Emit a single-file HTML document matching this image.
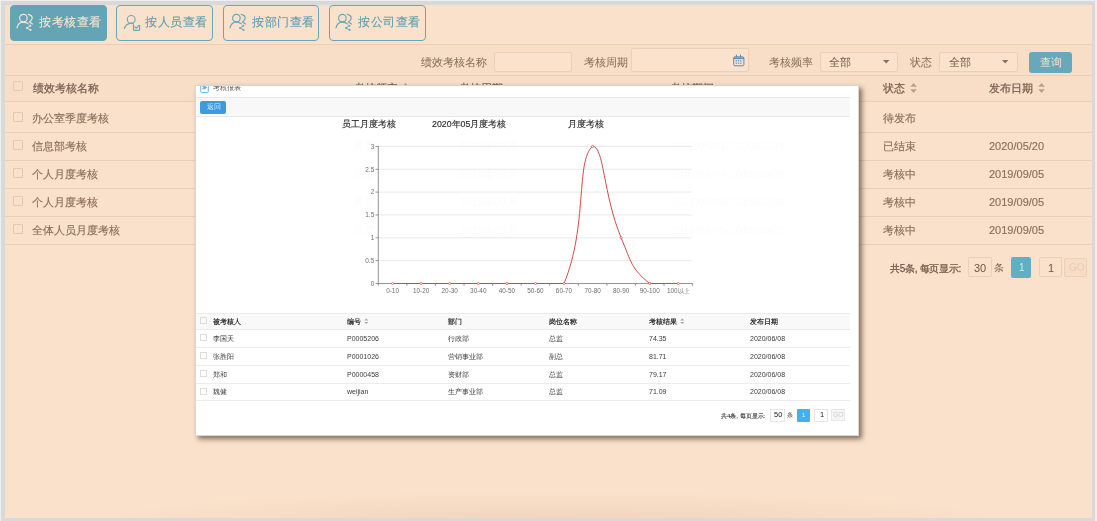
<!DOCTYPE html>
<html><head><meta charset="utf-8">
<style>
*{margin:0;padding:0;box-sizing:border-box}
html,body{width:1097px;height:521px;overflow:hidden;background:#efefef;font-family:"Liberation Sans",sans-serif}
.abs{position:absolute}
#frame{position:absolute;left:1px;top:1px;width:1094px;height:520px;background:#d9d9d9}
#page{position:absolute;left:5px;top:5px;width:1087px;height:513px;background:#fae1cb;overflow:hidden}
.t{position:absolute;white-space:nowrap;line-height:1;will-change:transform}
.hl{position:absolute;left:0;width:1087px;height:1px;background:#e9cfb8}
.btn{position:absolute;top:0;height:35.6px;border:1px solid #6aa6b7;border-radius:4px;color:#5c9db0;font-size:12.4px;letter-spacing:0.6px}
.btn.on{background:#63a4b5;border-color:#63a4b5;color:#fbe3cd}
.btn svg{position:absolute;left:5.2px;top:6.2px}
.btn span{position:absolute;left:27.5px;top:9.6px;line-height:1;will-change:transform;-webkit-text-stroke:0.12px currentColor}
.lbl{color:#8a6f5d;font-size:11px;-webkit-text-stroke:0.05px #8a6f5d}
.inp{position:absolute;border:1px solid #ead0ba;border-radius:2px;background:#fbe2cc}
.cb{position:absolute;width:10px;height:10px;border:1px solid #e4c8b1;border-radius:1px}
.td{color:#8a6f5d;font-size:11px;-webkit-text-stroke:0.15px #8a6f5d}
.th{color:#7a6150;font-size:11px;-webkit-text-stroke:0.25px #7a6150}

#modal{position:absolute;left:190px;top:80px;width:664px;height:351px;background:#fff;border:1px solid #d6d6d6;box-shadow:3px 3px 5px rgba(40,20,0,.55);overflow:hidden}
.mt{font-size:8.8px;color:#2a2a2a;-webkit-text-stroke:0.15px #2a2a2a}
.ax{font-size:6.5px;color:#666}
.mth{font-size:7px;font-weight:bold;color:#333}
.mtd{font-size:7px;color:#3a3a3a}
.mcb{position:absolute;width:7px;height:7px;border:1px solid #ddd}
.ml{position:absolute;left:0;width:654px;height:1px;background:#ececec}
</style></head><body>
<div id="frame"></div>
<div id="page">
  <!-- top buttons -->
  <div class="btn on" style="left:5px;width:97px">
    <svg width="22" height="22" viewBox="0 0 22 22" fill="none" stroke="#fbe3cd" stroke-width="1.2" stroke-linecap="round">
      <circle cx="7.4" cy="6.1" r="3.8"/>
      <path d="M1 15.9 C1.8 12.4 4.6 10.2 7.4 10.2 C9.4 10.2 11.2 10.9 12.4 11.9"/>
      <path d="M12.3 2.3 C14.6 2.8 16.2 4.3 16.2 6 C16.2 7.6 14.9 9 13.6 10 L16.4 12"/>
      <path d="M14.3 13.8 L11.1 16 L14.6 18.1" stroke-width="1"/>
      <circle cx="14.3" cy="13.8" r="1" fill="#fbe3cd" stroke="none"/><circle cx="11.1" cy="16" r="1.1" fill="#fbe3cd" stroke="none"/><circle cx="14.6" cy="18.1" r="1" fill="#fbe3cd" stroke="none"/>
    </svg>
    <span>按考核查看</span>
  </div>
  <div class="btn" style="left:111px;width:97px">
    <svg width="22" height="22" viewBox="0 0 22 22" fill="none" stroke="#6aa6b7" stroke-width="1.15" stroke-linecap="round">
      <circle cx="9.2" cy="7.4" r="3.9"/>
      <path d="M2.3 16.5 C3.4 13.6 5.6 11.6 8.6 11.4 L11.2 11.4"/>
      <path d="M11.5 12.6 V17.4 Q11.5 18.4 12.5 18.4 H16.6 Q17.6 18.4 17.6 17.4 V13.6"/>
      <path d="M12.8 14.9 L14.2 16.2 L17 13.4"/>
    </svg>
    <span>按人员查看</span>
  </div>
  <div class="btn" style="left:218px;width:96px">
    <svg width="22" height="22" viewBox="0 0 22 22" fill="none" stroke="#6aa6b7" stroke-width="1.2" stroke-linecap="round">
      <circle cx="7.4" cy="6.1" r="3.8"/>
      <path d="M1 15.9 C1.8 12.4 4.6 10.2 7.4 10.2 C9.4 10.2 11.2 10.9 12.4 11.9"/>
      <path d="M12.3 2.3 C14.6 2.8 16.2 4.3 16.2 6 C16.2 7.6 14.9 9 13.6 10 L16.4 12"/>
      <path d="M14.3 13.8 L11.1 16 L14.6 18.1" stroke-width="1"/>
      <circle cx="14.3" cy="13.8" r="1" fill="#6aa6b7" stroke="none"/><circle cx="11.1" cy="16" r="1.1" fill="#6aa6b7" stroke="none"/><circle cx="14.6" cy="18.1" r="1" fill="#6aa6b7" stroke="none"/>
    </svg>
    <span>按部门查看</span>
  </div>
  <div class="btn" style="left:324px;width:97px">
    <svg width="22" height="22" viewBox="0 0 22 22" fill="none" stroke="#6aa6b7" stroke-width="1.2" stroke-linecap="round">
      <circle cx="7.4" cy="6.1" r="3.8"/>
      <path d="M1 15.9 C1.8 12.4 4.6 10.2 7.4 10.2 C9.4 10.2 11.2 10.9 12.4 11.9"/>
      <path d="M12.3 2.3 C14.6 2.8 16.2 4.3 16.2 6 C16.2 7.6 14.9 9 13.6 10 L16.4 12"/>
      <path d="M14.3 13.8 L11.1 16 L14.6 18.1" stroke-width="1"/>
      <circle cx="14.3" cy="13.8" r="1" fill="#6aa6b7" stroke="none"/><circle cx="11.1" cy="16" r="1.1" fill="#6aa6b7" stroke="none"/><circle cx="14.6" cy="18.1" r="1" fill="#6aa6b7" stroke="none"/>
    </svg>
    <span>按公司查看</span>
  </div>
  <div class="abs" style="left:0;top:39px;width:1087px;height:57px;background:#f8dec7"></div>
  <div class="hl" style="top:39px"></div>

  <!-- filter row -->
  <div class="t lbl" style="left:416px;top:52px">绩效考核名称</div>
  <div class="inp" style="left:489px;top:47px;width:78px;height:20px"></div>
  <div class="t lbl" style="left:579px;top:52px">考核周期</div>
  <div class="inp" style="left:626px;top:43px;width:118px;height:24px"></div>
  <div class="t lbl" style="left:764px;top:52px">考核频率</div>
  <div class="inp" style="left:815px;top:47px;width:78px;height:20px"></div>
  <div class="t lbl" style="left:824px;top:52px;color:#7b6252">全部</div>
  <div class="t lbl" style="left:905px;top:52px">状态</div>
  <div class="inp" style="left:934px;top:47px;width:79px;height:20px"></div>
  <div class="t lbl" style="left:944px;top:52px;color:#7b6252">全部</div>
  <div class="abs" style="left:1024px;top:46.8px;width:43px;height:20.8px;background:#66a9ba;border-radius:3px"></div>
  <div class="t" style="left:1035px;top:52px;font-size:11px;color:#fbe3cd">查询</div>
  <div class="hl" style="top:70px"></div>
  <svg class="abs" style="left:905.3px;top:77.6px" width="8" height="11" viewBox="0 0 8 11"><path d="M0.3 3.7 L3.6 0 L6.9 3.7Z M0.3 6.3 L3.6 10 L6.9 6.3Z" fill="#b9a18c"/></svg>
  <svg class="abs" style="left:1033.2px;top:77.6px" width="8" height="11" viewBox="0 0 8 11"><path d="M0.3 3.7 L3.6 0 L6.9 3.7Z M0.3 6.3 L3.6 10 L6.9 6.3Z" fill="#b9a18c"/></svg>
  <svg class="abs" style="left:397.0px;top:77.6px" width="8" height="11" viewBox="0 0 8 11"><path d="M0.3 3.7 L3.6 0 L6.9 3.7Z M0.3 6.3 L3.6 10 L6.9 6.3Z" fill="#b9a18c"/></svg>
  <svg class="abs" style="left:727.8px;top:48.6px" width="12" height="13" viewBox="0 0 12 13" fill="none" stroke="#5b8db5" stroke-width="1"><rect x="0.7" y="2.8" width="10.2" height="9" rx="1.3"/><path d="M0.7 4.3 H10.9" stroke-width="1.6"/><path d="M3.4 0.6 V3.5 M7.5 0.6 V3.5"/><path d="M2.6 6.9 H9 M2.6 9.3 H9" stroke-dasharray="1.4 0.8" stroke-width="1.1"/></svg>
  <svg class="abs" style="left:877.5px;top:55.4px" width="7" height="4" viewBox="0 0 7 4"><path d="M0 0 H6.4 L3.2 3.6Z" fill="#8a7060"/></svg>
  <svg class="abs" style="left:997.0px;top:55.4px" width="7" height="4" viewBox="0 0 7 4"><path d="M0 0 H6.4 L3.2 3.6Z" fill="#8a7060"/></svg>

  <!-- main table -->
  <div class="cb" style="left:8px;top:76px"></div>
  <div class="t th" style="left:28px;top:78px">绩效考核名称</div>
  <div class="t th" style="left:348.5px;top:78px">考核频率</div>
  <div class="t th" style="left:453.5px;top:78px">考核周期</div>
  <div class="t th" style="left:665px;top:78px">考核期间</div>
  <div class="t th" style="left:878px;top:78px">状态</div>
  <div class="t th" style="left:984px;top:78px">发布日期</div>
  <div class="cb" style="left:8px;top:107px"></div><div class="t td" style="left:27px;top:108px">办公室季度考核</div>
  <div class="t td" style="left:878px;top:108px">待发布</div>
  <div class="cb" style="left:8px;top:135px"></div><div class="t td" style="left:27px;top:136px">信息部考核</div>
  <div class="t td" style="left:878px;top:136px">已结束</div><div class="t td" style="left:984px;top:136px">2020/05/20</div>
  <div class="cb" style="left:8px;top:163px"></div><div class="t td" style="left:27px;top:164px">个人月度考核</div>
  <div class="t td" style="left:878px;top:164px">考核中</div><div class="t td" style="left:984px;top:164px">2019/09/05</div>
  <div class="cb" style="left:8px;top:191px"></div><div class="t td" style="left:27px;top:192px">个人月度考核</div>
  <div class="t td" style="left:878px;top:192px">考核中</div><div class="t td" style="left:984px;top:192px">2019/09/05</div>
  <div class="cb" style="left:8px;top:219px"></div><div class="t td" style="left:27px;top:220px">全体人员月度考核</div>
  <div class="t td" style="left:878px;top:220px">考核中</div><div class="t td" style="left:984px;top:220px">2019/09/05</div>
  <div class="hl" style="top:96px"></div>
  <div class="hl" style="top:127px"></div>
  <div class="hl" style="top:155px"></div>
  <div class="hl" style="top:183px"></div>
  <div class="hl" style="top:211px"></div>
  <div class="hl" style="top:239px"></div>

  <div class="abs" style="left:100px;top:470px;width:900px;height:43px;background:radial-gradient(ellipse 50% 60% at 50% 100%, rgba(160,100,50,0.09), rgba(160,100,50,0) 100%)"></div>
  <!-- pagination -->
  <div class="t" style="left:885px;top:259px;font-size:10px;color:#6f5646;-webkit-text-stroke:0.25px #6f5646;letter-spacing:-0.3px">共5条, 每页显示:</div>
  <div class="inp" style="left:963px;top:252px;width:24px;height:20px;background:#fae1cb"></div>
  <div class="t" style="left:969px;top:258px;font-size:11px;color:#6f5646">30</div>
  <div class="t" style="left:989px;top:258px;font-size:10px;color:#6f5646">条</div>
  <div class="abs" style="left:1006px;top:252px;width:20px;height:21px;background:#5fb0c2;border-radius:2px"></div>
  <div class="t" style="left:1014px;top:258px;font-size:10px;color:#cfe6ec">1</div>
  <div class="inp" style="left:1034px;top:252px;width:23px;height:20px;background:#fae1cb"></div>
  <div class="t" style="left:1043px;top:258px;font-size:11px;color:#6f5646">1</div>
  <div class="inp" style="left:1059px;top:253px;width:23px;height:19px;background:#f8dcc6"></div>
  <div class="t" style="left:1064px;top:258px;font-size:10px;color:#e6cdb8">GO</div>

  <!-- modal -->
  <div id="modal">
    <div class="t" style="left:157px;top:55px;font-size:11px;color:#fcfcfc;-webkit-text-stroke:0.2px #fcfcfc">月度</div>
    <div class="t" style="left:263px;top:55px;font-size:11px;color:#fcfcfc;-webkit-text-stroke:0.2px #fcfcfc">2020年05月</div>
    <div class="t" style="left:475px;top:55px;font-size:11px;color:#fcfcfc;-webkit-text-stroke:0.2px #fcfcfc">2020/05/01-2020/05/31</div>
    <div class="t" style="left:157px;top:83px;font-size:11px;color:#fcfcfc;-webkit-text-stroke:0.2px #fcfcfc">月度</div>
    <div class="t" style="left:263px;top:83px;font-size:11px;color:#fcfcfc;-webkit-text-stroke:0.2px #fcfcfc">2019年09月</div>
    <div class="t" style="left:475px;top:83px;font-size:11px;color:#fcfcfc;-webkit-text-stroke:0.2px #fcfcfc">2019/09/04-2019/09/20</div>
    <div class="t" style="left:157px;top:111px;font-size:11px;color:#fcfcfc;-webkit-text-stroke:0.2px #fcfcfc">月度</div>
    <div class="t" style="left:263px;top:111px;font-size:11px;color:#fcfcfc;-webkit-text-stroke:0.2px #fcfcfc">2019年09月</div>
    <div class="t" style="left:475px;top:111px;font-size:11px;color:#fcfcfc;-webkit-text-stroke:0.2px #fcfcfc">2019/09/05-2019/09/30</div>
    <div class="t" style="left:157px;top:139px;font-size:11px;color:#fcfcfc;-webkit-text-stroke:0.2px #fcfcfc">月度</div>
    <div class="t" style="left:263px;top:139px;font-size:11px;color:#fcfcfc;-webkit-text-stroke:0.2px #fcfcfc">2019年09月</div>
    <div class="t" style="left:475px;top:139px;font-size:11px;color:#fcfcfc;-webkit-text-stroke:0.2px #fcfcfc">2019/09/05-2019/09/29</div>
    <svg class="abs" style="left:3.6px;top:-1.2px" width="10" height="9" viewBox="0 0 10 9"><path d="M0.7 0 V6.6 Q0.7 7.6 1.7 7.6 H7.3 Q8.3 7.6 8.3 6.6 V0" fill="none" stroke="#6ab6ee" stroke-width="1"/><path d="M2.2 1.4 H3.2 M2.2 3.6 H3.2 M3.8 0.8 L6.6 2.5 L3.8 4.2Z" stroke="#5aaee9" stroke-width="0.9" fill="#5aaee9"/></svg>
    <div class="t" style="left:17px;top:-2px;font-size:7px;color:#555">考核报表</div>
    <div class="abs" style="left:0;top:11px;width:654px;height:20px;background:#f8f8f8;border-top:1px solid #e8e8e8;border-bottom:1px solid #e8e8e8"></div>
    <div class="abs" style="left:4px;top:15px;width:26px;height:13px;background:#3c9be0;border-radius:2px"></div>
    <div class="t" style="left:10.5px;top:18px;font-size:6.5px;color:#d0e8fa">返回</div>
    <div class="t mt" style="left:146px;top:34px">员工月度考核</div>
    <div class="t mt" style="left:236px;top:34px">2020年05月度考核</div>
    <div class="t mt" style="left:372px;top:34px">月度考核</div>
    <svg class="abs" style="left:-196px;top:-86px" width="1097" height="521" viewBox="0 0 1097 521">
<line x1="378.3" y1="260.65" x2="691.6" y2="260.65" stroke="#e3e3e3" stroke-width="0.8"/>
<line x1="378.3" y1="237.80" x2="691.6" y2="237.80" stroke="#e3e3e3" stroke-width="0.8"/>
<line x1="378.3" y1="214.95" x2="691.6" y2="214.95" stroke="#e3e3e3" stroke-width="0.8"/>
<line x1="378.3" y1="192.10" x2="691.6" y2="192.10" stroke="#e3e3e3" stroke-width="0.8"/>
<line x1="378.3" y1="169.25" x2="691.6" y2="169.25" stroke="#e3e3e3" stroke-width="0.8"/>
<line x1="378.3" y1="146.40" x2="691.6" y2="146.40" stroke="#e3e3e3" stroke-width="0.8"/>
<line x1="378.30" y1="146" x2="378.30" y2="283.90" stroke="#7a7a7a" stroke-width="0.8"/>
<line x1="378.3" y1="283.50" x2="692.6" y2="283.50" stroke="#7a7a7a" stroke-width="0.8"/>
<line x1="375.5" y1="283.50" x2="378.3" y2="283.50" stroke="#7a7a7a" stroke-width="0.8"/>
<text x="374.2" y="285.80" text-anchor="end" font-size="6.4" fill="#6e6e6e" font-family="Liberation Sans">0</text>
<line x1="375.5" y1="260.65" x2="378.3" y2="260.65" stroke="#7a7a7a" stroke-width="0.8"/>
<text x="374.2" y="262.95" text-anchor="end" font-size="6.4" fill="#6e6e6e" font-family="Liberation Sans">0.5</text>
<line x1="375.5" y1="237.80" x2="378.3" y2="237.80" stroke="#7a7a7a" stroke-width="0.8"/>
<text x="374.2" y="240.10" text-anchor="end" font-size="6.4" fill="#6e6e6e" font-family="Liberation Sans">1</text>
<line x1="375.5" y1="214.95" x2="378.3" y2="214.95" stroke="#7a7a7a" stroke-width="0.8"/>
<text x="374.2" y="217.25" text-anchor="end" font-size="6.4" fill="#6e6e6e" font-family="Liberation Sans">1.5</text>
<line x1="375.5" y1="192.10" x2="378.3" y2="192.10" stroke="#7a7a7a" stroke-width="0.8"/>
<text x="374.2" y="194.40" text-anchor="end" font-size="6.4" fill="#6e6e6e" font-family="Liberation Sans">2</text>
<line x1="375.5" y1="169.25" x2="378.3" y2="169.25" stroke="#7a7a7a" stroke-width="0.8"/>
<text x="374.2" y="171.55" text-anchor="end" font-size="6.4" fill="#6e6e6e" font-family="Liberation Sans">2.5</text>
<line x1="375.5" y1="146.40" x2="378.3" y2="146.40" stroke="#7a7a7a" stroke-width="0.8"/>
<text x="374.2" y="148.70" text-anchor="end" font-size="6.4" fill="#6e6e6e" font-family="Liberation Sans">3</text>
<line x1="378.30" y1="283.50" x2="378.30" y2="285.70" stroke="#7a7a7a" stroke-width="0.8"/>
<line x1="406.87" y1="283.50" x2="406.87" y2="285.70" stroke="#7a7a7a" stroke-width="0.8"/>
<line x1="435.45" y1="283.50" x2="435.45" y2="285.70" stroke="#7a7a7a" stroke-width="0.8"/>
<line x1="464.02" y1="283.50" x2="464.02" y2="285.70" stroke="#7a7a7a" stroke-width="0.8"/>
<line x1="492.59" y1="283.50" x2="492.59" y2="285.70" stroke="#7a7a7a" stroke-width="0.8"/>
<line x1="521.16" y1="283.50" x2="521.16" y2="285.70" stroke="#7a7a7a" stroke-width="0.8"/>
<line x1="549.74" y1="283.50" x2="549.74" y2="285.70" stroke="#7a7a7a" stroke-width="0.8"/>
<line x1="578.31" y1="283.50" x2="578.31" y2="285.70" stroke="#7a7a7a" stroke-width="0.8"/>
<line x1="606.88" y1="283.50" x2="606.88" y2="285.70" stroke="#7a7a7a" stroke-width="0.8"/>
<line x1="635.45" y1="283.50" x2="635.45" y2="285.70" stroke="#7a7a7a" stroke-width="0.8"/>
<line x1="664.03" y1="283.50" x2="664.03" y2="285.70" stroke="#7a7a7a" stroke-width="0.8"/>
<line x1="692.60" y1="283.50" x2="692.60" y2="285.70" stroke="#7a7a7a" stroke-width="0.8"/>
<text x="392.59" y="293.2" text-anchor="middle" font-size="6.4" fill="#6e6e6e" font-family="Liberation Sans">0-10</text>
<text x="421.16" y="293.2" text-anchor="middle" font-size="6.4" fill="#6e6e6e" font-family="Liberation Sans">10-20</text>
<text x="449.73" y="293.2" text-anchor="middle" font-size="6.4" fill="#6e6e6e" font-family="Liberation Sans">20-30</text>
<text x="478.30" y="293.2" text-anchor="middle" font-size="6.4" fill="#6e6e6e" font-family="Liberation Sans">30-40</text>
<text x="506.88" y="293.2" text-anchor="middle" font-size="6.4" fill="#6e6e6e" font-family="Liberation Sans">40-50</text>
<text x="535.45" y="293.2" text-anchor="middle" font-size="6.4" fill="#6e6e6e" font-family="Liberation Sans">50-60</text>
<text x="564.02" y="293.2" text-anchor="middle" font-size="6.4" fill="#6e6e6e" font-family="Liberation Sans">60-70</text>
<text x="592.60" y="293.2" text-anchor="middle" font-size="6.4" fill="#6e6e6e" font-family="Liberation Sans">70-80</text>
<text x="621.17" y="293.2" text-anchor="middle" font-size="6.4" fill="#6e6e6e" font-family="Liberation Sans">80-90</text>
<text x="649.74" y="293.2" text-anchor="middle" font-size="6.4" fill="#6e6e6e" font-family="Liberation Sans">90-100</text>
<text x="678.31" y="293.2" text-anchor="middle" font-size="6.4" fill="#6e6e6e" font-family="Liberation Sans">100以上</text>
<path d="M392.59 283.50 C392.59 283.50 406.87 283.50 421.16 283.50 C435.45 283.50 435.45 283.50 449.73 283.50 C464.02 283.50 464.02 283.50 478.30 283.50 C492.59 283.50 492.59 283.50 506.88 283.50 C521.16 283.50 521.16 283.50 535.45 283.50 C549.74 283.50 559.18 283.50 564.02 283.50 C587.75 226.57 575.63 159.97 592.60 146.40 C604.20 146.40 602.89 193.94 621.17 237.80 C631.46 262.49 631.07 268.57 649.74 283.50 C659.64 283.50 678.31 283.50 678.31 283.50" fill="none" stroke="#cc4240" stroke-width="0.95"/>
<circle cx="392.59" cy="283.50" r="1.1" fill="#fff" stroke="#cc4240" stroke-width="0.6"/>
<circle cx="421.16" cy="283.50" r="1.1" fill="#fff" stroke="#cc4240" stroke-width="0.6"/>
<circle cx="449.73" cy="283.50" r="1.1" fill="#fff" stroke="#cc4240" stroke-width="0.6"/>
<circle cx="478.30" cy="283.50" r="1.1" fill="#fff" stroke="#cc4240" stroke-width="0.6"/>
<circle cx="506.88" cy="283.50" r="1.1" fill="#fff" stroke="#cc4240" stroke-width="0.6"/>
<circle cx="535.45" cy="283.50" r="1.1" fill="#fff" stroke="#cc4240" stroke-width="0.6"/>
<circle cx="564.02" cy="283.50" r="1.1" fill="#fff" stroke="#cc4240" stroke-width="0.6"/>
<circle cx="592.60" cy="146.40" r="1.1" fill="#fff" stroke="#cc4240" stroke-width="0.6"/>
<circle cx="621.17" cy="237.80" r="1.1" fill="#fff" stroke="#cc4240" stroke-width="0.6"/>
<circle cx="649.74" cy="283.50" r="1.1" fill="#fff" stroke="#cc4240" stroke-width="0.6"/>
<circle cx="678.31" cy="283.50" r="1.1" fill="#fff" stroke="#cc4240" stroke-width="0.6"/>
</svg>
    <div class="abs" style="left:0.0px;top:226.5px;width:654px;height:17px;background:#f9f9f9;border-top:1px solid #ececec"></div>
    <div class="ml" style="top:243.2px"></div>
    <div class="ml" style="top:261.0px"></div>
    <div class="ml" style="top:278.8px"></div>
    <div class="ml" style="top:296.8px"></div>
    <div class="ml" style="top:314.2px"></div>
    <div class="mcb" style="left:3.5px;top:231.0px"></div>
    <div class="t mth" style="left:16.6px;top:231.5px">被考核人</div>
    <div class="t mth" style="left:151.2px;top:231.5px">编号</div><svg class="abs" style="left:168.2px;top:231.6px" width="5" height="7" viewBox="0 0 5 7"><path d="M0.2 2.5 L2.3 0.6 L4.4 2.5Z M0.2 4.1 L2.3 6 L4.4 4.1Z" fill="#aaa"/></svg>
    <div class="t mth" style="left:252.2px;top:231.5px">部门</div>
    <div class="t mth" style="left:352.7px;top:231.5px">岗位名称</div>
    <div class="t mth" style="left:453.2px;top:231.5px">考核结果</div><svg class="abs" style="left:483.9px;top:231.6px" width="5" height="7" viewBox="0 0 5 7"><path d="M0.2 2.5 L2.3 0.6 L4.4 2.5Z M0.2 4.1 L2.3 6 L4.4 4.1Z" fill="#aaa"/></svg>
    <div class="t mth" style="left:553.7px;top:231.5px">发布日期</div>
    <div class="mcb" style="left:3.5px;top:248.4px"></div>
    <div class="t mtd" style="left:16.6px;top:248.9px">李国天</div>
    <div class="t mtd" style="left:151.2px;top:248.9px">P0005206</div>
    <div class="t mtd" style="left:252.2px;top:248.9px">行政部</div>
    <div class="t mtd" style="left:352.7px;top:248.9px">总监</div>
    <div class="t mtd" style="left:453.2px;top:248.9px">74.35</div>
    <div class="t mtd" style="left:553.7px;top:248.9px">2020/06/08</div>
    <div class="mcb" style="left:3.5px;top:266.2px"></div>
    <div class="t mtd" style="left:16.6px;top:266.7px">张胜阳</div>
    <div class="t mtd" style="left:151.2px;top:266.7px">P0001026</div>
    <div class="t mtd" style="left:252.2px;top:266.7px">营销事业部</div>
    <div class="t mtd" style="left:352.7px;top:266.7px">副总</div>
    <div class="t mtd" style="left:453.2px;top:266.7px">81.71</div>
    <div class="t mtd" style="left:553.7px;top:266.7px">2020/06/08</div>
    <div class="mcb" style="left:3.5px;top:284.0px"></div>
    <div class="t mtd" style="left:16.6px;top:284.5px">郑和</div>
    <div class="t mtd" style="left:151.2px;top:284.5px">P0000458</div>
    <div class="t mtd" style="left:252.2px;top:284.5px">资财部</div>
    <div class="t mtd" style="left:352.7px;top:284.5px">总监</div>
    <div class="t mtd" style="left:453.2px;top:284.5px">79.17</div>
    <div class="t mtd" style="left:553.7px;top:284.5px">2020/06/08</div>
    <div class="mcb" style="left:3.5px;top:301.8px"></div>
    <div class="t mtd" style="left:16.6px;top:302.3px">魏健</div>
    <div class="t mtd" style="left:151.2px;top:302.3px">weijian</div>
    <div class="t mtd" style="left:252.2px;top:302.3px">生产事业部</div>
    <div class="t mtd" style="left:352.7px;top:302.3px">总监</div>
    <div class="t mtd" style="left:453.2px;top:302.3px">71.09</div>
    <div class="t mtd" style="left:553.7px;top:302.3px">2020/06/08</div>
    <div class="t" style="left:525px;top:326.5px;font-size:6px;color:#333;-webkit-text-stroke:0.1px #333">共4条, 每页显示:</div>
    <div class="abs" style="left:574.0px;top:322.5px;width:15px;height:13px;border:1px solid #e5e5e5"></div>
    <div class="t" style="left:577.5px;top:325px;font-size:7.5px;color:#222">50</div>
    <div class="t" style="left:590.8px;top:326.2px;font-size:6px;color:#333">条</div>
    <div class="abs" style="left:601.0px;top:322.5px;width:13px;height:13px;background:#41b1f2;border-radius:1px"></div>
    <div class="t" style="left:606.0px;top:326.0px;font-size:6px;color:#e0f0fb">1</div>
    <div class="abs" style="left:618.0px;top:322.5px;width:14px;height:13px;border:1px solid #e5e5e5"></div>
    <div class="t" style="left:623.5px;top:325px;font-size:7.5px;color:#222">1</div>
    <div class="abs" style="left:634.5px;top:323.0px;width:14px;height:12px;border:1px solid #e8e8e8;background:#f5f5f5"></div>
    <div class="t" style="left:637px;top:325.8px;font-size:6.6px;color:#d0d0d0">GO</div>
  </div>
</div>
</body></html>
